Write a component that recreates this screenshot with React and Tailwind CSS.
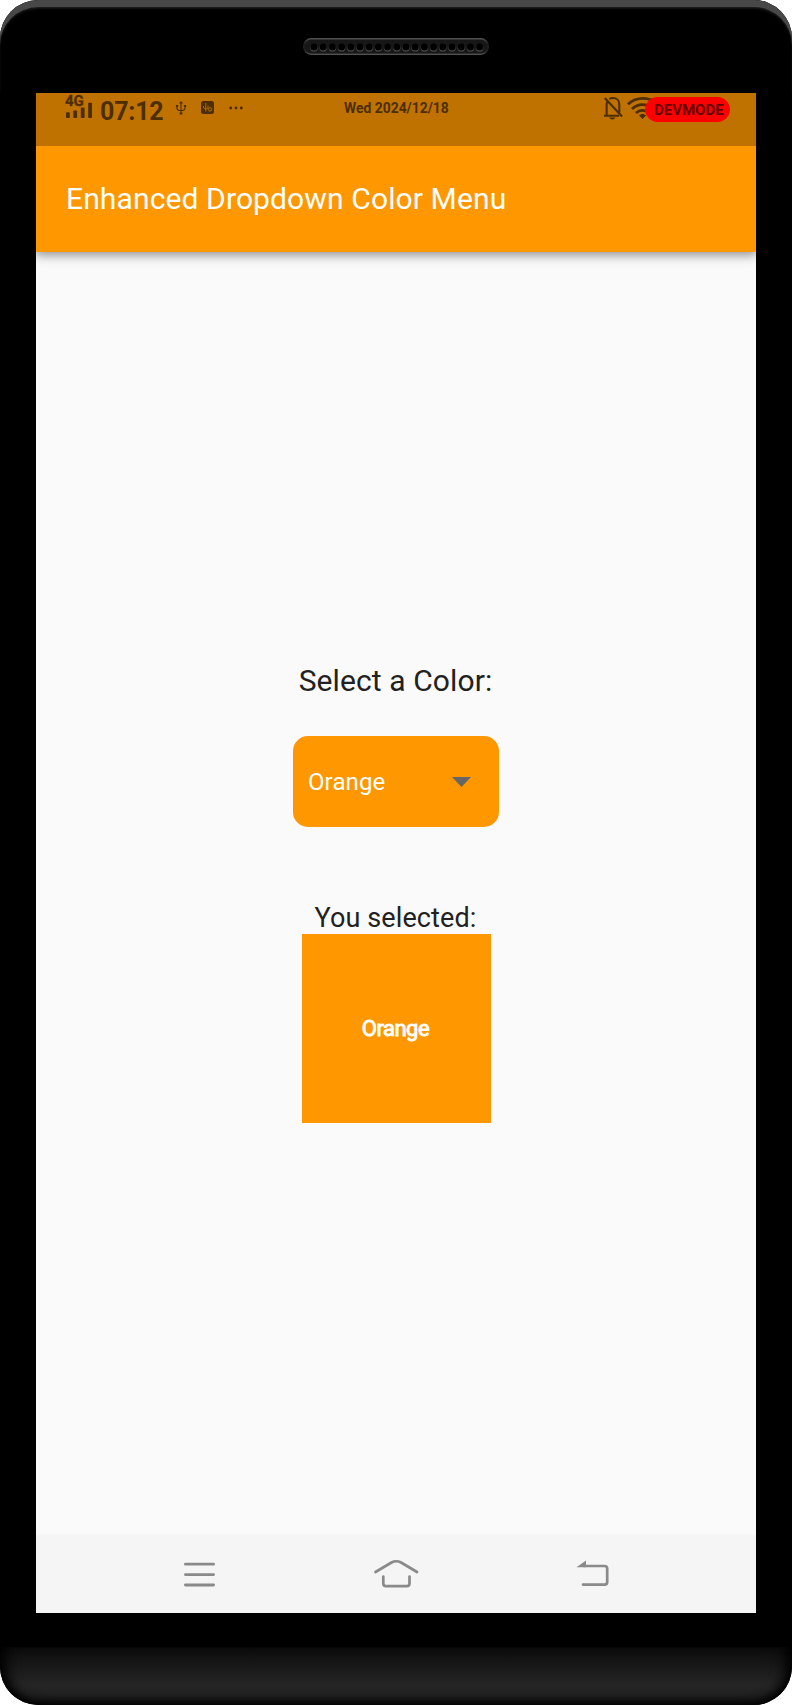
const holes = Array.from({ length: 19 }, (_, i) => 11 + i * 9.2);

function Speaker() {
  return (
    <svg className="mr-[1px] block h-[17px] w-[186px]" viewBox="0 0 186 17">
      <defs>
        <linearGradient id="rim" x1="0" y1="0" x2="0" y2="1">
          <stop offset="0" stopColor="#505050" />
          <stop offset="0.35" stopColor="#1c1c1c" />
          <stop offset="0.75" stopColor="#202020" />
          <stop offset="1" stopColor="#505050" />
        </linearGradient>
      </defs>
      <rect x="0.75" y="0.75" width="184.5" height="15.5" rx="7.75" fill="#171717" stroke="url(#rim)" strokeWidth="1.5" />
      {holes.map((x) => (
        <g key={x}>
          <circle cx={x} cy="9.9" r="3.7" fill="#505050" />
          <circle cx={x} cy="9" r="3.5" fill="#000" />
        </g>
      ))}
    </svg>
  );
}

function StatusBar() {
  return (
    <div className="relative z-10 flex h-[53px] items-start bg-[#bf7200] pl-[29px] pr-[26px] text-[#4d2e00]">
      <div className="mt-[2px] w-[35px]">
        <div className="h-[9px] text-[15px] leading-[12px] font-bold [-webkit-text-stroke:0.3px_#4d2e00]">4G</div>
        <svg className="ml-[1px] block h-[14px] w-[26px] overflow-visible" viewBox="0 0 26 14" fill="currentColor">
          <rect x="0" y="8.3" width="3.8" height="5.7" rx="0.8" />
          <rect x="7.3" y="6.5" width="3.8" height="7.5" rx="0.8" />
          <rect x="14.8" y="3.6" width="3.8" height="10.4" rx="0.8" />
          <rect x="22.2" y="-1.3" width="3.8" height="15.3" rx="0.8" />
        </svg>
      </div>
      <div className="mt-[4px] w-[75px] text-[25px] leading-[30px] font-bold tracking-[-0.2px]">07:12</div>
      <svg className="mt-[8px] h-[14px] w-[12px]" viewBox="0 0 12 14" fill="none" stroke="currentColor" strokeWidth="1.1">
        <path d="M6 1.5V12M2 5v2.2c0 1.5 1.5 2.3 4 2.3s4-.8 4-2.3V5" />
        <path d="M6 0l2 2.6H4zM4.6 11.4h2.8v2H4.6zM.9 4h2.2v2H.9zM8.9 4h2.2v2H8.9z" fill="currentColor" stroke="none" />
      </svg>
      <svg className="mt-[8px] ml-[14px] h-[13px] w-[13px]" viewBox="0 0 13 13" fill="none">
        <rect width="13" height="13" rx="2.5" fill="currentColor" />
        <path d="M4.8 2v8.5M2.5 5v1.7l2.3 1.6L7 6.8V4.5" stroke="#bf7200" strokeWidth="0.9" />
        <circle cx="9" cy="8.4" r="1.7" stroke="#bf7200" strokeWidth="0.9" />
      </svg>
      <svg className="mt-[13px] ml-[15px] h-[4px] w-[14px]" viewBox="0 0 14 4" fill="currentColor">
        <circle cx="1.7" cy="2" r="1.4" />
        <circle cx="7" cy="2" r="1.4" />
        <circle cx="12.3" cy="2" r="1.4" />
      </svg>
      <div className="mt-[6px] ml-[101px] text-[13.9px] leading-[18px] font-bold whitespace-nowrap">Wed 2024/12/18</div>
      <div className="ml-auto flex items-start">
        <svg className="mt-[3px] h-[24px] w-[20px]" viewBox="0 0 20 24" fill="none" stroke="currentColor" strokeWidth="2.1">
          <path d="M0 19.800H15M2.600 19.800V8.500Q2.600 6.500 3.500 5M5.300 3Q6.800 2 8.800 2C12.800 2 15.300 4.700 15.300 8.500V16.500M0.800 2L18 20.500" />
          <path d="M5.300 21.500h6c-.5 1.200-1.500 1.900-3 1.900s-2.500-.7-3-1.900z" fill="currentColor" stroke="none" />
        </svg>
        <svg className="mt-[3px] ml-[3px] h-[24px] w-[32px]" viewBox="0 0 32 24" fill="none" stroke="currentColor" strokeWidth="2.900">
          <path d="M1 8.200c8.500-7.800 21.500-7.800 30 0M5 13c6-5.800 15-5.800 21 0M9 17c3.800-3.500 9.200-3.500 13 0" />
          <path d="M12 19.500c1.800-2 5.200-2 7 0L15.500 23z" fill="currentColor" stroke="none" />
        </svg>
        <div className="relative mt-[4px] -ml-[14px] h-[25px] w-[85px] rounded-full bg-[#ff0000] pl-[9px] text-[15px] leading-[26px] font-bold text-[#660000]">
          DEVMODE
        </div>
      </div>
    </div>
  );
}

function NavBar() {
  return (
    <div className="flex h-[79px] items-center bg-[#f5f5f5] pb-[1px] text-[#8a8a8a]">
      <svg className="mt-[2px] ml-[147px] h-[28px] w-[34px]" viewBox="0 0 34 28" fill="none" stroke="currentColor" strokeWidth="2.8" strokeLinecap="round">
        <path d="M2.400 4.200h28.200M2.400 14.600h28.200M2.400 25h28.200" />
      </svg>
      <svg className="ml-[155px] h-[32px] w-[48px]" viewBox="0 0 48 32" fill="none" stroke="currentColor" strokeWidth="2.700" strokeLinecap="round">
        <path d="M3.500 15L19.500 5.500q4.800-2.500 9.600 0L45 15M11.300 19.500v7q0 2.700 2.700 2.700h20.800q2.700 0 2.700-2.700v-7" />
      </svg>
      <svg className="mt-[1px] ml-[155px] h-[30px] w-[36px]" viewBox="0 0 36 30" fill="none" stroke="currentColor" strokeWidth="2.700" strokeLinecap="round">
        <path d="M9 7h20.500q2.700 0 2.700 2.700v13.200q0 2.700-2.700 2.700H8" />
        <path d="M1.500 8.300L11 1.500v6.800z" fill="currentColor" stroke="none" />
      </svg>
    </div>
  );
}

export default function App() {
  return (
    <div className="h-[1705px] w-[792px] bg-white font-['Roboto',sans-serif]">
      <div className="flex h-[1705px] flex-col overflow-hidden rounded-[38px] bg-black">
        <div className="flex h-[93px] shrink-0 justify-center rounded-t-[38px] pt-[38px] shadow-[inset_0_7px_0_#484848,inset_0_9px_3px_-1px_#2a2a2a]">
          <Speaker />
        </div>
        <div className="mx-[36px] flex h-[1520px] shrink-0 flex-col bg-[#fafafa]">
          <StatusBar />
          <div className="flex h-[106px] items-center bg-[#ff9800] pb-[2px] pl-[30px] text-[30px] tracking-[0.12px] whitespace-nowrap text-white shadow-[0_3px_8px_rgba(0,0,0,0.3),0_6px_12px_rgba(0,0,0,0.12)]">
            Enhanced Dropdown Color Menu
          </div>
          <div className="flex flex-1 flex-col items-center pt-[411px] text-[#212121]">
            <div className="h-[73px] pr-[1px] text-[30px] leading-[36px] tracking-[0.1px] whitespace-nowrap">Select a Color:</div>
            <div className="flex h-[91px] w-[206px] items-center justify-between rounded-[15px] bg-[#ff9800] pr-[28px] pl-[15px] text-[24px] tracking-[0.1px] text-white">
              <span>Orange</span>
              <svg className="h-[10px] w-[19px]" viewBox="0 0 19 10">
                <path d="M0 0h19L9.500 10z" fill="#666" />
              </svg>
            </div>
            <div className="mt-[75px] h-[32px] pr-[1px] text-[27px] leading-[32px] tracking-[0.1px] whitespace-nowrap">You selected:</div>
            <div className="flex h-[189px] w-[189px] items-center justify-center bg-[#ff9800] pr-[1px] text-[22px] tracking-[-0.5px] text-white [-webkit-text-stroke:0.9px_#fff]">
              Orange
            </div>
          </div>
          <NavBar />
        </div>
        <div className="mt-[34px] flex-1 rounded-b-[38px] bg-linear-to-b from-[#0c0c0c] via-[#252525] via-65% to-[#1f1f1f] shadow-[inset_0_-8px_10px_-4px_#000,inset_14px_0_14px_-8px_#000,inset_-14px_0_14px_-8px_#000]" />
      </div>
    </div>
  );
}
